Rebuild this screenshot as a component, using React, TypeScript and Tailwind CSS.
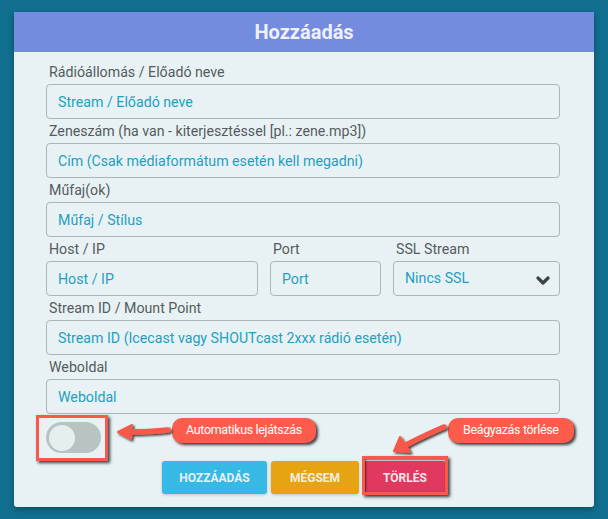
import React from "react";

const font = { fontFamily: "Roboto, 'Liberation Sans', sans-serif" };

function Label({ children }: { children: React.ReactNode }) {
  return (
    <div className="mt-[2px] mb-[2px] pl-[3px] text-[14.2px] leading-5 text-[#555b5e]">{children}</div>
  );
}

function Field({ placeholder }: { placeholder: string }) {
  return (
    <input
      placeholder={placeholder}
      className="block h-[35px] w-full rounded-[4px] border border-[#aab5b7] bg-[#e8f2f4] px-[11px] text-[14.2px] text-[#1f9fc1] outline-none placeholder:text-[#1f9fc1]"
      style={font}
    />
  );
}

export default function App() {
  return (
    <div className="relative min-h-[519px] w-[608px] bg-[#11708f] pt-[12px]" style={font}>
      <div className="mx-[14px] w-[580px] rounded-b-[3px] bg-[#e8f2f4] shadow-[0_2px_6px_rgba(0,0,0,0.35)]">
        <div className="flex h-[40px] items-center justify-center bg-[#748ce0] text-[20px] font-bold text-[#eef1fb]">
          Hozzáadás
        </div>
        <div className="pl-[32px] pr-[34px] pt-[8px] pb-[13px]">
          <Label>Rádióállomás / Előadó neve</Label>
          <Field placeholder="Stream / Előadó neve" />
          <Label>Zeneszám (ha van - kiterjesztéssel [pl.: zene.mp3])</Label>
          <Field placeholder="Cím (Csak médiaformátum esetén kell megadni)" />
          <Label>Műfaj(ok)</Label>
          <Field placeholder="Műfaj / Stílus" />
          <div className="grid grid-cols-[212px_111px_167px] gap-x-[12px]">
            <div>
              <Label>Host / IP</Label>
              <Field placeholder="Host / IP" />
            </div>
            <div>
              <Label>Port</Label>
              <Field placeholder="Port" />
            </div>
            <div>
              <Label>SSL Stream</Label>
              <div className="flex h-[35px] w-full items-center justify-between rounded-[4px] border border-[#aab5b7] bg-[#e8f2f4] pl-[11px] pr-[9px] text-[14.2px] text-[#1f9fc1]">
                <span>Nincs SSL</span>
                <svg width="14" height="10" viewBox="0 0 14 10" className="mt-[4px]">
                  <path d="M2 2 L7 7 L12 2" fill="none" stroke="#3d4345" strokeWidth="3.2" strokeLinecap="round" strokeLinejoin="round" />
                </svg>
              </div>
            </div>
          </div>
          <Label>Stream ID / Mount Point</Label>
          <Field placeholder="Stream ID (Icecast vagy SHOUTcast 2xxx rádió esetén)" />
          <Label>Weboldal</Label>
          <Field placeholder="Weboldal" />

          <div className="relative flex h-[40px] items-start pt-[8px]">
            <div className="relative h-[31px] w-[55px] rounded-full bg-[#b8c4c4]">
              <div className="absolute left-[3px] top-[2.5px] h-[26px] w-[26px] rounded-full bg-[#e6eff0]" />
              <div className="absolute left-[-10px] top-[-7px] h-[46px] w-[72px] border-[3px] border-[#f7594a] shadow-[2px_2px_3px_rgba(0,0,0,0.75)]" />
            </div>
            <div className="absolute left-[126px] top-[4px] flex h-[25px] items-center whitespace-nowrap rounded-[10px] bg-[#fd5b4b] px-[14px] text-[12.5px] tracking-[-0.35px] text-white shadow-[2px_2px_3px_rgba(0,0,0,0.75)]">
              Automatikus lejátszás
            </div>
            <div className="absolute left-[402px] top-[4px] flex h-[25px] items-center whitespace-nowrap rounded-[10px] bg-[#fd5b4b] px-[15px] text-[12.5px] tracking-[-0.35px] text-white shadow-[2px_2px_3px_rgba(0,0,0,0.75)]">
              Beágyazás törlése
            </div>
          </div>

          <div className="mt-[7px] flex justify-center gap-[4px] pl-[2px]">
            <button className="h-[33px] w-[105px] rounded-[3px] bg-[#36b9e5] text-[12px] font-bold text-[#e9f0f6] shadow-[0_1px_3px_rgba(0,0,0,0.2)]">
              HOZZÁADÁS
            </button>
            <button className="h-[33px] w-[88px] rounded-[3px] bg-[#e6a312] text-[12px] font-bold text-[#f3ede4] shadow-[0_1px_3px_rgba(0,0,0,0.2)]">
              MÉGSEM
            </button>
            <div className="relative ml-[1px]">
              <button className="h-[33px] w-[82px] rounded-[3px] bg-[#e0385f] text-[12px] font-bold text-[#f1e6ea] shadow-[0_1px_3px_rgba(0,0,0,0.2)]">
                TÖRLÉS
              </button>
              <div className="absolute left-[-2px] top-[-5px] h-[39px] w-[86px] border-[3px] border-[#f7594a] shadow-[2px_2px_3px_rgba(0,0,0,0.75),inset_1px_1px_2px_rgba(0,0,0,0.6)]" />
            </div>
          </div>
        </div>
      </div>

      <svg className="pointer-events-none absolute left-0 top-0" width="608" height="519" viewBox="0 0 608 519">
        <defs>
          <filter id="sh" x="-20%" y="-50%" width="140%" height="200%">
            <feDropShadow dx="1.5" dy="1.5" stdDeviation="1" floodColor="#000" floodOpacity="0.8" />
          </filter>
        </defs>
        <g filter="url(#sh)" fill="#f7594a" stroke="#f7594a" strokeLinejoin="round" strokeLinecap="round">
          <path d="M168 430 Q150 432 128 432" fill="none" strokeWidth="5.5" />
          <path d="M118 432 L132 425 L131 439 Z" strokeWidth="2" />
          <path d="M444 427 Q425 435 404 446" fill="none" strokeWidth="5.5" />
          <path d="M394 451 L400 437 L410 452 Z" strokeWidth="2" />
        </g>
      </svg>
    </div>
  );
}
